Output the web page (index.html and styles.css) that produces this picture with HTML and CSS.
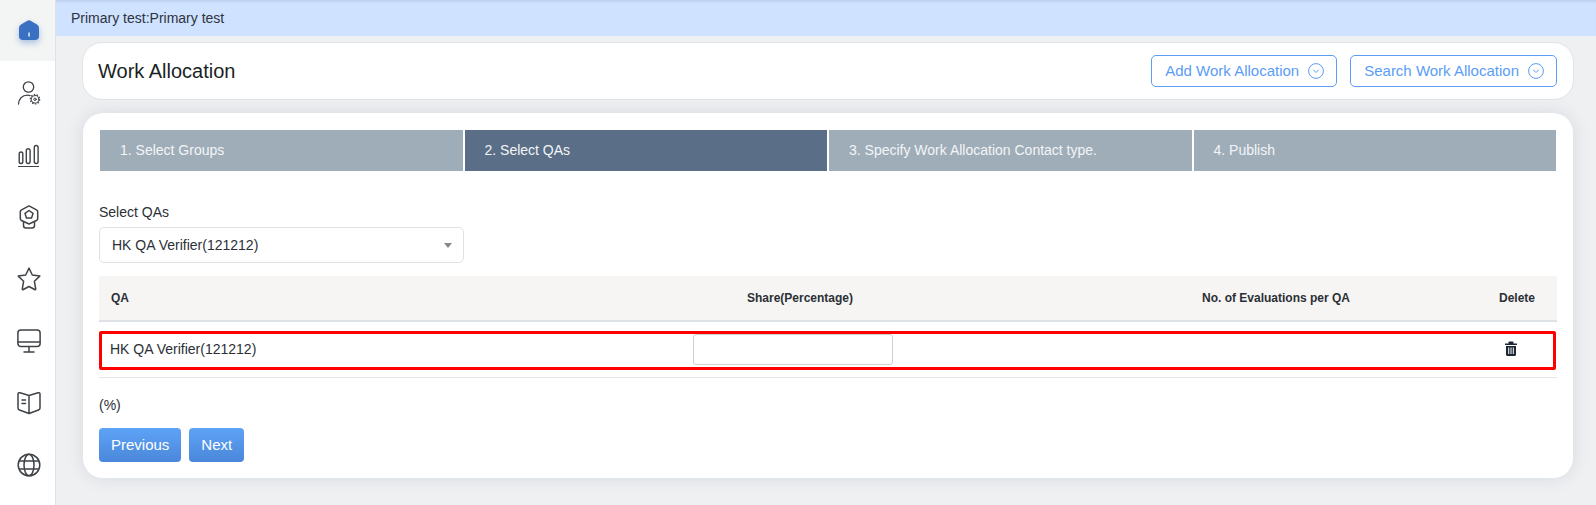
FILE: index.html
```html
<!DOCTYPE html>
<html lang="en">
<head>
<meta charset="utf-8">
<title>Work Allocation</title>
<link rel="stylesheet" href="styles.css">
</head>
<body>
<div class="app">
  <nav class="sidebar">
    <div class="nav-item nav-home">
      <svg class="home-icon" width="20" height="20" viewBox="0 0 20 20"><path d="M8 .9Q10 -.3 12 .9L18 4.400Q20 5.600 20 8V16Q20 20 16 20H4Q0 20 0 16V8Q0 5.600 2 4.400Z" fill="#3a70c2"/><rect x="9.400" y="12.500" width="1.300" height="4" fill="#fff"/></svg>
    </div>
    <div class="nav-item">
      <svg width="24" height="24" viewBox="0 0 24 24" fill="none" stroke="#3f4347" stroke-width="1.300" stroke-linecap="round"><circle cx="11.500" cy="6" r="5.200"/><path d="M1.500 23c0-5 3.800-8.800 9-8.800 1 0 1.800.1 2.600.4"/><circle cx="18" cy="18.300" r="1.200" stroke-width="1"/><circle cx="18" cy="18.300" r="3.800" stroke-width="1"/><circle cx="18" cy="18.300" r="4.700" stroke-width="1.200" stroke-dasharray="1.500 1.400" stroke-linecap="butt"/></svg>
    </div>
    <div class="nav-item">
      <svg width="24" height="24" viewBox="0 0 24 24" fill="none" stroke="#3f4347" stroke-width="1.400"><rect x="2.200" y="9" width="3.600" height="11.500" rx="1.800"/><rect x="9.300" y="5.700" width="3.800" height="14.800" rx="1.900"/><rect x="17.300" y="2.500" width="3.800" height="18" rx="1.900"/><path d="M1 23.700h21"/></svg>
    </div>
    <div class="nav-item">
      <svg width="24" height="24" viewBox="0 0 24 24" fill="none" stroke="#3f4347" stroke-width="1.500" stroke-linejoin="round"><path d="M12 .9 19.500 4.800Q20.700 5.500 20.700 6.800V13.500Q20.700 14.800 19.500 15.500L12 19 4.500 15.500Q3.300 14.800 3.300 13.500V6.800Q3.300 5.500 4.500 4.800Z"/><path d="M12 5.500 16 8.400 14.500 13H9.500L8 8.400Z"/><path d="M6.500 17V20.500Q6.500 23 9 23H15Q17.500 23 17.500 20.500V17"/></svg>
    </div>
    <div class="nav-item">
      <svg width="24" height="24" viewBox="0 0 24 24" fill="none" stroke="#3f4347" stroke-width="1.500" stroke-linejoin="round"><path d="M12 1.200 15.300 8 22.800 9.100 17.400 14.300 18.700 21.800Q18.800 23 17.700 22.500L12 19.500 6.300 22.500Q5.200 23 5.300 21.800L6.600 14.300 1.200 9.100 8.700 8Z"/></svg>
    </div>
    <div class="nav-item">
      <svg width="24" height="24" viewBox="0 0 24 24" fill="none" stroke="#3f4347" stroke-width="1.500" stroke-linecap="round"><rect x=".9" y="1" width="22.200" height="16.500" rx="3"/><path d="M1 13h22M12 17.500v5.500M7 23h10"/></svg>
    </div>
    <div class="nav-item">
      <svg width="24" height="24" viewBox="0 0 24 24" fill="none" stroke="#3f4347" stroke-width="1.500" stroke-linecap="round" stroke-linejoin="round"><path d="M12 4.500 3 1.800Q1 1.300 1 3.300V17Q1 18.500 2.500 19L12 22.500 21.500 19Q23 18.500 23 17V3.300Q23 1.300 21 1.800L12 4.500ZM12 4.500V22.500"/><path d="M5 9h3.500M5 12.500h3.500"/></svg>
    </div>
    <div class="nav-item">
      <svg width="24" height="24" viewBox="0 0 24 24" fill="none" stroke="#3f4347" stroke-width="1.500"><circle cx="12" cy="12" r="10.800"/><ellipse cx="12" cy="12" rx="5" ry="10.800"/><path d="M2 8h20M2 16h20"/></svg>
    </div>
  </nav>
  <main class="content">
    <div class="notice">Primary test:Primary test</div>
    <header class="page-head">
      <h1 class="page-title">Work Allocation</h1>
      <div class="head-actions">
        <button class="outline-btn" type="button">Add Work Allocation
          <svg width="16" height="16" viewBox="0 0 16 16" fill="none" stroke="#5b9df5" stroke-width="1"><circle cx="8" cy="8" r="7.400"/><path d="M5.500 7 8 9.500 10.500 7" stroke-linecap="round"/></svg>
        </button>
        <button class="outline-btn" type="button">Search Work Allocation
          <svg width="16" height="16" viewBox="0 0 16 16" fill="none" stroke="#5b9df5" stroke-width="1"><circle cx="8" cy="8" r="7.400"/><path d="M5.500 7 8 9.500 10.500 7" stroke-linecap="round"/></svg>
        </button>
      </div>
    </header>
    <section class="card">
      <ol class="steps">
        <li class="step">1. Select Groups</li>
        <li class="step step-active">2. Select QAs</li>
        <li class="step">3. Specify Work Allocation Contact type.</li>
        <li class="step">4. Publish</li>
      </ol>
      <label class="field-label">Select QAs</label>
      <div class="select-box">
        <span>HK QA Verifier(121212)</span>
        <span class="caret"></span>
      </div>
      <div class="table-head">
        <div class="th">QA</div>
        <div class="th th-center">Share(Percentage)</div>
        <div class="th th-center">No. of Evaluations per QA</div>
        <div class="th th-right">Delete</div>
      </div>
      <div class="table-row">
        <div class="cell-raised">HK QA Verifier(121212)</div>
        <input class="share-input" type="text">
        <div></div>
        <svg class="trash" width="14" height="15" viewBox="0 0 14 15"><path d="M1 2.500H4.500V1.200Q4.500.5 5.200.5H8.800Q9.500.5 9.500 1.200V2.500H13V4H1Z" fill="#1d2733"/><path d="M2 5H12V13.500Q12 15 10.500 15H3.500Q2 15 2 13.500ZM4.200 6.500V13H5.200V6.500ZM6.500 6.500V13H7.500V6.500ZM8.800 6.500V13H9.800V6.500Z" fill="#1d2733" fill-rule="evenodd"/></svg>
      </div>
      <div class="row-rule"></div>
      <p class="unit">(%)</p>
      <div class="form-actions">
        <button class="solid-btn" type="button">Previous</button>
        <button class="solid-btn" type="button">Next</button>
      </div>
    </section>
  </main>
</div>
</body>
</html>
```

FILE: styles.css
```css
* { box-sizing: border-box; }
html, body { margin: 0; height: 100%; }
body {
  font-family: "Liberation Sans", Arial, sans-serif;
  font-size: 14px;
  line-height: 20px;
  color: #212529;
  background: #eef0f2;
  overflow: hidden;
}
.app { display: flex; min-height: 505px; }
.sidebar {
  width: 56px;
  flex: none;
  background: #fff;
  border-right: 1px solid #dfe2e5;
  display: flex;
  flex-direction: column;
}
.nav-item {
  height: 62px;
  flex: none;
  padding-left: 2px;
  display: flex;
  align-items: center;
  justify-content: center;
}
.nav-home { background: #f3f4f4; height: 61px; margin-bottom: 1px; }
.home-icon { filter: drop-shadow(0 3px 3px rgba(58, 112, 194, .4)); margin-top: -1px; }
.content { flex: 1; min-width: 0; }
.notice {
  height: 36px;
  background: #cfe2ff;
  padding: 8px 15px;
  color: #2c3440;
  box-shadow: inset 0 3px 3px -2px rgba(60, 80, 110, .18);
}
.page-head {
  margin: 6px 22px 0 26px;
  height: 58px;
  padding: 0 16px 0 15px;
  background: #fff;
  border: 1px solid #e0e3e6;
  border-radius: 20px;
  display: flex;
  align-items: center;
  justify-content: space-between;
}
.page-title { margin: 0; font-size: 20px; font-weight: 400; color: #1b1f24; }
.head-actions { display: flex; gap: 13px; }
.outline-btn {
  height: 32px;
  padding: 0 12px 2px 13px;
  background: #fff;
  border: 1px solid #5b9df5;
  border-radius: 5px;
  color: #5b9df5;
  font: 15px "Liberation Sans", Arial, sans-serif;
  display: flex;
  align-items: center;
  gap: 9px;
}
.outline-btn svg { margin-top: 2px; }
.card {
  margin: 13px 23px 0 27px;
  padding: 17px 16px 16px;
  background: #fff;
  border-radius: 20px;
  box-shadow: 0 0 18px rgba(40, 50, 60, .11);
}
.steps {
  list-style: none;
  margin: 0 1px 31px;
  padding: 0;
  display: flex;
  gap: 2px;
}
.step {
  flex: 1;
  height: 41px;
  padding: 10px 20px;
  background: #9fadb9;
  color: #f3f5f6;
}
.step-active { background: #5a6e87; }
.field-label { display: block; margin-bottom: 5px; color: #2b3036; }
.select-box {
  width: 365px;
  height: 36px;
  padding: 0 11px 0 12px;
  border: 1px solid #dee2e6;
  border-radius: 5px;
  display: flex;
  align-items: center;
  justify-content: space-between;
  color: #2b3036;
}
.caret {
  width: 0;
  height: 0;
  border: 4px solid transparent;
  border-top: 5px solid #888;
  border-bottom: 0;
}
.table-head {
  margin-top: 13px;
  height: 46px;
  background: #f6f5f4;
  border-bottom: 2px solid #dee2e6;
  display: grid;
  grid-template-columns: 405px 592px 360px 1fr;
  align-items: center;
}
.th { font-size: 12px; font-weight: 700; color: #2b3036; }
.th:first-child { padding-left: 12px; }
.th-center { text-align: center; }
.th-right { text-align: right; padding-right: 22px; }
.table-row {
  margin-top: 9px;
  margin-right: 1px;
  height: 39px;
  padding: 0 35px 4px 8px;
  border: 3px solid #f00;
  border-radius: 2px;
  display: grid;
  grid-template-columns: 583px 200px 1fr 14px;
  align-items: center;
  color: #2b3036;
}
.cell-raised { margin-bottom: 2px; }
.share-input {
  height: 31px;
  width: 200px;
  border: 1px solid #ced0d3;
  border-radius: 3px;
  background: #fff;
}
.trash { display: block; margin-bottom: 2px; }
.row-rule { margin-top: 7px; height: 1px; background: #e6e8ea; }
.unit { margin: 17px 0 0; color: #2b3036; }
.form-actions { margin-top: 13px; display: flex; gap: 8px; }
.solid-btn {
  height: 34px;
  padding: 0 12px 2px;
  border: 0;
  border-radius: 4px;
  background: linear-gradient(#5ea3f6, #4a87da);
  color: #fff;
  font: 15px "Liberation Sans", Arial, sans-serif;
}
```
